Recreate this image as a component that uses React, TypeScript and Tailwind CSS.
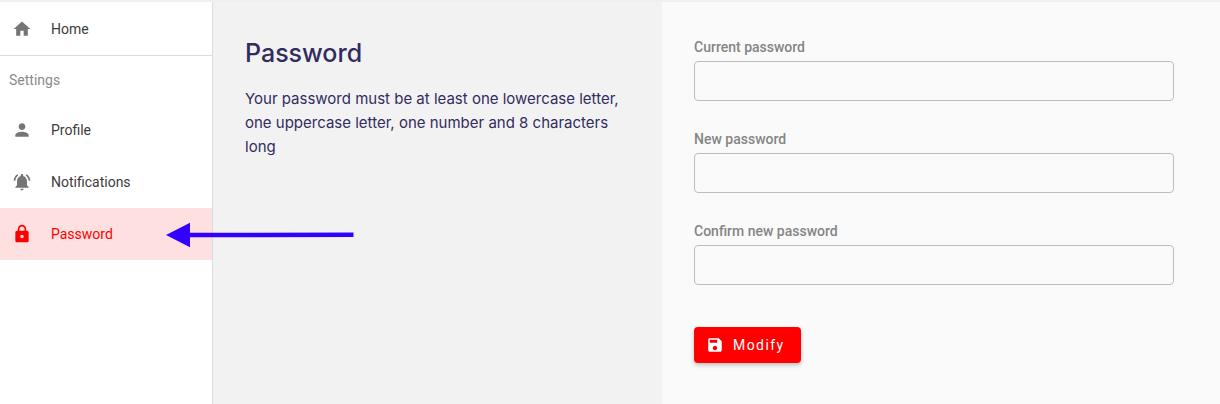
import React from 'react';

const icons = {
  home: 'M10 20v-6h4v6h5v-8h3L12 3 2 12h3v8z',
  person: 'M12 12c2.21 0 4-1.79 4-4s-1.79-4-4-4-4 1.79-4 4 1.79 4 4 4zm0 2c-2.67 0-8 1.34-8 4v2h16v-2c0-2.66-5.33-4-8-4z',
  bell: 'M7.58 4.08L6.15 2.65C3.75 4.48 2.17 7.3 2.03 10.5h2c.15-2.65 1.51-4.97 3.55-6.42zm12.39 6.42h2c-.15-3.2-1.73-6.02-4.12-7.85l-1.42 1.43c2.02 1.45 3.39 3.77 3.54 6.42zM18 11c0-3.07-1.64-5.64-4.5-6.32V4c0-.83-.67-1.5-1.5-1.5s-1.5.67-1.5 1.5v.68C7.63 5.36 6 7.92 6 11v5l-2 2v1h16v-1l-2-2v-5zm-6 11c.14 0 .27-.01.4-.04.65-.14 1.18-.58 1.44-1.18.1-.24.15-.5.15-.78h-4c.01 1.1.9 2 2.01 2z',
  lock: 'M18 8h-1V6c0-2.76-2.24-5-5-5S7 3.24 7 6v2H6c-1.1 0-2 .9-2 2v10c0 1.1.9 2 2 2h12c1.1 0 2-.9 2-2V10c0-1.1-.9-2-2-2zm-6 9c-1.1 0-2-.9-2-2s.9-2 2-2 2 .9 2 2-.9 2-2 2zm3.1-9H8.9V6c0-1.71 1.39-3.1 3.1-3.1 1.71 0 3.1 1.39 3.1 3.1v2z',
  save: 'M17 3H5c-1.11 0-2 .9-2 2v14c0 1.1.89 2 2 2h14c1.1 0 2-.9 2-2V7l-4-4zm-5 16c-1.66 0-3-1.34-3-3s1.34-3 3-3 3 1.34 3 3-1.34 3-3 3zm3-10H5V5h10v4z',
};

const Icon = ({ d, className }: { d: string; className: string }) => (
  <svg viewBox="0 0 24 24" fill="currentColor" className={className}>
    <path d={d} />
  </svg>
);

const NavItem = ({ icon, label, active }: { icon: string; label: string; active?: boolean }) => (
  <div className={`flex items-center h-[52px] pl-[12px] ${active ? 'bg-[#fee0e0] text-[#ff0000]' : 'text-[#3c3c3c]'}`}>
    <Icon d={icon} className={`w-5 h-5 ${active ? 'text-[#ff0000]' : 'text-[#757575]'}`} />
    <span className="ml-[19px] text-[14px] font-['Roboto',sans-serif]">{label}</span>
  </div>
);

const Field = ({ label }: { label: string }) => (
  <div className="flex flex-col">
    <label className="h-[28px] text-[14px] leading-[28px] font-medium text-[#858585] font-['Roboto',sans-serif]">{label}</label>
    <input type="password" className="w-[480px] h-[40px] rounded-[4px] border border-[#bdbdbd] bg-[#fafafa]" />
  </div>
);

export default function App() {
  return (
    <div className="relative w-[1220px] h-[404px] overflow-hidden bg-white flex flex-col">
      <div className="h-[2px] bg-[#f0f0f0]" />
      <div className="flex flex-1">
        {/* Sidebar */}
        <aside className="w-[213px] border-r border-[#dcdcdc] bg-white">
          <div className="border-b border-[#dcdcdc] pt-px">
            <NavItem icon={icons.home} label="Home" />
          </div>
          <div className="h-[48px] pl-[9px] flex items-center text-[14px] text-[#8a8a8a] font-['Roboto',sans-serif]">Settings</div>
          <NavItem icon={icons.person} label="Profile" />
          <NavItem icon={icons.bell} label="Notifications" />
          <NavItem icon={icons.lock} label="Password" active />
        </aside>

        {/* Description */}
        <section className="w-[449px] bg-[#f2f2f2] pl-[32px] pt-[33px] pr-[30px] text-[#322c5e]">
          <h1 className="text-[25px] leading-[36px] font-medium font-['Inter',sans-serif]">Password</h1>
          <p className="mt-[16px] text-[15px] leading-[24px] font-['Inter',sans-serif]">
            Your password must be at least one lowercase letter, one uppercase letter, one number and 8 characters long
          </p>
        </section>

        {/* Form */}
        <section className="flex-1 bg-[#fafafa] pl-[32px] pt-[31px]">
          <div className="flex flex-col gap-[24px]">
            <Field label="Current password" />
            <Field label="New password" />
            <Field label="Confirm new password" />
          </div>
          <button className="mt-[42px] w-[107px] h-[36px] flex items-center pl-[12px] rounded-[4px] bg-[#ff0000] text-white shadow-[0_2px_4px_rgba(0,0,0,0.25)]">
            <Icon d={icons.save} className="w-[18px] h-[18px]" />
            <span className="ml-[9px] text-[14px] tracking-[1.45px] font-['Roboto',sans-serif]">Modify</span>
          </button>
        </section>
      </div>

      {/* Annotation arrow */}
      <svg className="absolute left-[160px] top-[215px] w-[200px] h-[40px]" viewBox="0 0 200 40">
        <path d="M6 20 L30 7.7 V17.8 L193.5 17.6 V22 L30 22.3 V32.3 Z" fill="#3300ff" />
      </svg>
    </div>
  );
}
